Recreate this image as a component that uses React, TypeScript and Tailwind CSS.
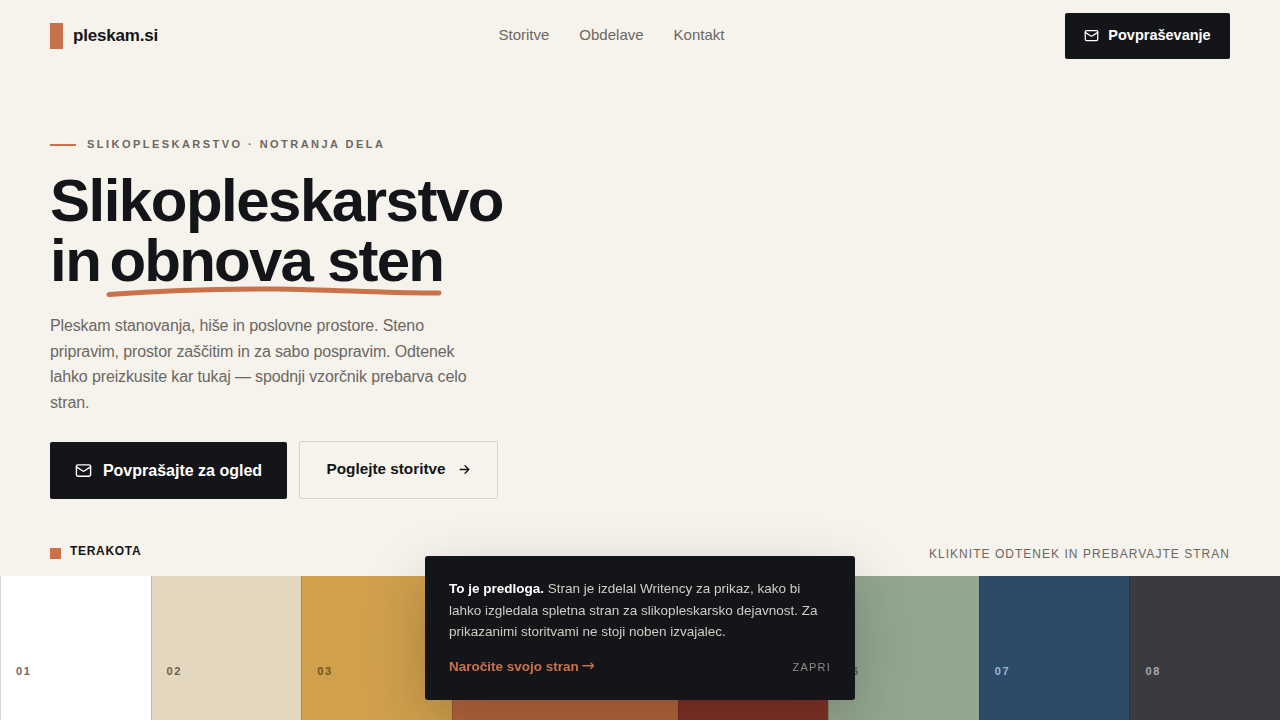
const swatches = [
  { n: "01", bg: "bg-[#ffffff]", text: "text-[#6b6862]", grow: "flex-[1]" },
  { n: "02", bg: "bg-[#e3d7c0]", text: "text-[#6b5f4a]", grow: "flex-[1]" },
  { n: "03", bg: "bg-[#d0a04d]", text: "text-[#6f5320]", grow: "flex-[1]" },
  { n: "04", bg: "bg-[#b4643c]", text: "text-[#f0d5c5]", grow: "flex-[1.5]" },
  { n: "05", bg: "bg-[#7f3127]", text: "text-[#e0b8b0]", grow: "flex-[1]" },
  { n: "06", bg: "bg-[#93a78e]", text: "text-[#4d5c49]", grow: "flex-[1]" },
  { n: "07", bg: "bg-[#2e4a69]", text: "text-[#9db8d6]", grow: "flex-[1]" },
  { n: "08", bg: "bg-[#3a3b41]", text: "text-[#a9a9ad]", grow: "flex-[1]" },
];

function Mail({ size }: { size: number }) {
  return (
    <svg width={size} height={size} viewBox="0 0 24 24" fill="none" stroke="currentColor" strokeWidth="2" strokeLinecap="round" strokeLinejoin="round">
      <rect x="2" y="4" width="20" height="16" rx="2" />
      <path d="m22 7-8.97 5.7a1.94 1.94 0 0 1-2.06 0L2 7" />
    </svg>
  );
}

export default function App() {
  return (
    <div className="h-screen overflow-hidden flex flex-col bg-[#f6f2ec] text-[#141518] font-['Liberation_Sans',sans-serif]">
      <header className="h-[71px] px-[50px] flex items-center justify-between shrink-0">
        <div className="flex items-center gap-[10px]">
          <span className="w-[13px] h-[26px] bg-[#c9714a]" />
          <span className="text-[17px] font-bold tracking-[-0.2px]">pleskam.si</span>
        </div>
        <nav className="flex gap-[30px] text-[15px] text-[#6b6862]">
          <span>Storitve</span>
          <span>Obdelave</span>
          <span>Kontakt</span>
        </nav>
        <button className="w-[165px] h-[46px] bg-[#141518] text-white rounded-[2px] flex items-center justify-center gap-[9px] text-[14.5px] font-bold">
          <Mail size={15} />
          Povpraševanje
        </button>
      </header>

      <main className="flex-1 flex flex-col min-h-0">
        <div className="px-[50px] pt-[66px]">
          <div className="flex items-center gap-[11px] h-[14px]">
            <span className="w-[26px] h-[2px] mt-[2px] bg-[#c9714a]" />
            <span className="text-[11px] font-bold tracking-[2.46px] text-[#6b6862]">SLIKOPLESKARSTVO · NOTRANJA DELA</span>
          </div>
          <h1 className="mt-[20px] text-[60px] leading-[60px] font-bold tracking-[-1.5px]">
            Slikopleskarstvo
            <br />
            in{" "}
            <span className="relative inline-block ml-[-6px] tracking-[-1.8px]">
              obnova sten
              <svg className="absolute left-[-5px] top-[52px]" width="340" height="14" viewBox="0 0 340 14" fill="none">
                <path d="M4 11.5 C 60 7.5, 110 6, 170 6 C 230 6.5, 280 10.5, 334 10" stroke="#c9714a" strokeWidth="5" strokeLinecap="round" />
              </svg>
            </span>
          </h1>
          <p className="mt-[22px] w-[440px] text-[16px] leading-[25.6px] tracking-[-0.13px] text-[#6b6862]">
            Pleskam stanovanja, hiše in poslovne prostore. Steno pripravim, prostor zaščitim in za sabo pospravim. Odtenek lahko preizkusite kar tukaj — spodnji vzorčnik prebarva celo stran.
          </p>
          <div className="mt-[26px] flex items-center gap-[12px]">
            <button className="w-[237px] h-[57px] pt-px bg-[#141518] text-white rounded-[2px] flex items-center justify-center gap-[11px] text-[16px] font-bold">
              <Mail size={17} />
              Povprašajte za ogled
            </button>
            <button className="w-[199px] h-[58px] pb-px border border-[#d9d4cb] rounded-[2px] flex items-center justify-center gap-[12px] text-[15.3px] font-bold">
              Poglejte storitve
              <svg width="13" height="13" viewBox="0 0 24 24" fill="none" stroke="currentColor" strokeWidth="2.4" strokeLinecap="round" strokeLinejoin="round">
                <path d="M4 12h16M13 5l7 7-7 7" />
              </svg>
            </button>
          </div>
          <div className="mt-[46px] h-[14px] flex items-center justify-between">
            <div className="flex items-center gap-[9px]">
              <span className="w-[11px] h-[11px] mt-[2px] bg-[#c9714a]" />
              <span className="text-[12px] font-bold tracking-[0.7px] mb-[2px]">TERAKOTA</span>
            </div>
            <span className="text-[12px] tracking-[1.03px] mt-[3px] text-[#6b6862]">KLIKNITE ODTENEK IN PREBARVAJTE STRAN</span>
          </div>
        </div>
        <div className="mt-[17px] flex flex-1 min-h-0">
          {swatches.map((s) => (
            <div key={s.n} className={`${s.grow} min-w-0 ${s.bg}`}>
              <div className="h-full border-l border-black/15 pl-[15px] pt-[82px]">
                <span className={`text-[11px] font-bold tracking-[1.6px] ${s.text}`}>{s.n}</span>
              </div>
            </div>
          ))}
        </div>
      </main>

      <div className="fixed left-[425px] top-[556px] w-[430px] h-[144px] bg-[#141518] rounded-[3px] px-[24px] pt-[22px] shadow-[0_20px_60px_rgba(0,0,0,0.2)]">
        <p className="text-[13.5px] leading-[21.6px] text-[#cfccc6]">
          <strong className="text-white font-bold">To je predloga.</strong> Stran je izdelal Writency za prikaz, kako bi lahko izgledala spletna stran za slikopleskarsko dejavnost. Za prikazanimi storitvami ne stoji noben izvajalec.
        </p>
        <div className="mt-[14px] flex items-center justify-between">
          <span className="text-[13.5px] font-bold text-[#c9714a]">Naročite svojo stran <span className="font-['DejaVu_Sans',sans-serif] font-normal text-[16px] leading-none ml-[-1px]">→</span></span>
          <span className="text-[11px] tracking-[1.2px] text-[#8c8b88]">ZAPRI</span>
        </div>
      </div>
    </div>
  );
}
